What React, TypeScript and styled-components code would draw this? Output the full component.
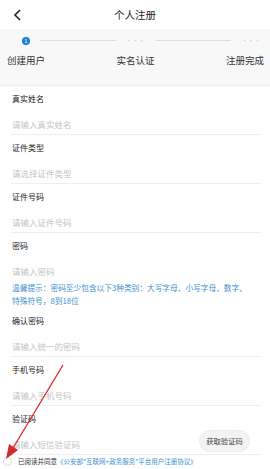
import React from 'react';
import styled, { createGlobalStyle } from 'styled-components';

const GlobalStyle = createGlobalStyle`
  html, body {
    margin: 0;
    padding: 0;
    background: #ffffff;
  }
  body {
    font-family: "Noto Sans CJK SC", "Noto Sans", sans-serif;
    -webkit-font-smoothing: antialiased;
  }
`;

interface Field {
  label: string;
  placeholder: string;
  hint?: string;
  action?: string;
  noDivider?: boolean;
}

const fields: Field[] = [
  { label: '真实姓名', placeholder: '请输入真实姓名' },
  { label: '证件类型', placeholder: '请选择证件类型' },
  { label: '证件号码', placeholder: '请输入证件号码' },
  {
    label: '密码',
    placeholder: '请输入密码',
    noDivider: true,
    hint: '温馨提示：密码至少包含以下3种类别：大写字母、小写字母、数字、\n特殊符号，8到18位',
  },
  { label: '确认密码', placeholder: '请输入统一的密码' },
  { label: '手机号码', placeholder: '请输入手机号码' },
  { label: '验证码', placeholder: '请输入短信验证码', action: '获取验证码' },
];

const steps = ['创建用户', '实名认证', '注册完成'];

const App: React.FC = () => {
  return (
    <>
      <GlobalStyle />
      <Page>
        <Header>
          <Back>
            <svg width="9" height="12" viewBox="0 0 9 12">
              <path d="M7 1 L2 6 L7 11" fill="none" stroke="#222" strokeWidth="1.6" />
            </svg>
          </Back>
          <Title>个人注册</Title>
        </Header>

        <Steps>
          <Track>
            <Dot>1</Dot>
            <Line />
            <Dots>···</Dots>
            <Line />
            <Dots>···</Dots>
          </Track>
          <Labels>
            {steps.map((s) => (
              <StepLabel key={s}>{s}</StepLabel>
            ))}
          </Labels>
        </Steps>

        <Form>
          {fields.map((f) => (
            <Row key={f.label} $noDivider={f.noDivider}>
              <Label>{f.label}</Label>
              <InputLine>
                <Placeholder>{f.placeholder}</Placeholder>
                {f.action && <CodeButton>{f.action}</CodeButton>}
              </InputLine>
              {f.hint && <Hint>{f.hint}</Hint>}
            </Row>
          ))}
        </Form>

        <Agreement>
          <Check />
          <span>
            已阅读并同意<Link>《公安部"互联网+政务服务"平台用户注册协议》</Link>
          </span>
        </Agreement>

        <Arrow width="270" height="469" viewBox="0 0 270 469">
          <line x1="63" y1="365" x2="13" y2="448" stroke="#d32a2a" strokeWidth="1.3" />
          <polygon points="6,459 9,444 18,450" fill="#d32a2a" />
        </Arrow>
      </Page>
    </>
  );
};

const Page = styled.div`
  position: relative;
  width: 270px;
  height: 469px;
  overflow: hidden;
  background: #ffffff;
`;

const Header = styled.div`
  height: 29px;
  display: flex;
  align-items: center;
  justify-content: center;
  position: relative;
`;

const Back = styled.div`
  position: absolute;
  left: 13px;
  top: 9px;
  display: flex;
`;

const Title = styled.div`
  font-size: 10.5px;
  color: #222;
`;

const Steps = styled.div`
  background: #f8f8f8;
  height: 57px;
  border-bottom: 1px solid #efefef;
  box-sizing: border-box;
  padding: 7px 6px 0 7px;
`;

const Track = styled.div`
  display: flex;
  align-items: center;
  height: 9px;
  padding-left: 15px;
  padding-right: 3px;
  gap: 10px;
`;

const Dot = styled.div`
  width: 8px;
  height: 8px;
  border-radius: 50%;
  background: #1d7fd8;
  color: #fff;
  font-size: 5px;
  line-height: 8px;
  text-align: center;
  font-family: "Liberation Sans", sans-serif;
  flex: none;
`;

const Line = styled.div`
  flex: 1;
  height: 1px;
  background: #dcdcdc;
`;

const Dots = styled.div`
  font-size: 6px;
  color: #c8c8c8;
  letter-spacing: 0.5px;
  line-height: 9px;
  flex: none;
`;

const Labels = styled.div`
  display: flex;
  justify-content: space-between;
  margin-top: 9px;
`;

const StepLabel = styled.div`
  font-size: 9.5px;
  color: #333;
  line-height: 12px;
`;

const Form = styled.div`
  padding: 0 9px 0 11px;
`;

const Row = styled.div<{ $noDivider?: boolean }>`
  border-bottom: 1px solid ${(p) => (p.$noDivider ? 'transparent' : '#eeeeee')};
  padding-top: 8px;
`;

const Label = styled.div`
  font-size: 8px;
  line-height: 10px;
  color: #222;
  padding-left: 1px;
`;

const InputLine = styled.div`
  height: 21px;
  margin-top: 9px;
  display: flex;
  align-items: center;
  justify-content: space-between;
  padding-left: 1px;
`;

const Placeholder = styled.div`
  font-size: 8.5px;
  color: #c4c4c4;
`;

const CodeButton = styled.div`
  width: 51px;
  height: 22px;
  border-radius: 11px;
  background: #f3f3f3;
  border: 1px solid #ececec;
  box-sizing: border-box;
  display: flex;
  align-items: center;
  justify-content: center;
  font-size: 7.3px;
  color: #444;
  margin-right: 11px;
  margin-top: -5px;
  flex: none;
`;

const Hint = styled.div`
  font-size: 7.7px;
  line-height: 13px;
  color: #3d8fd1;
  padding-left: 1px;
  white-space: pre-line;
`;

const Agreement = styled.div`
  display: flex;
  align-items: center;
  gap: 6px;
  height: 11px;
  padding-left: 3px;
  margin-top: 1px;
  font-size: 6.5px;
  line-height: 11px;
  color: #333;
`;

const Check = styled.div`
  width: 9px;
  height: 9px;
  border-radius: 50%;
  border: 1px solid #dcdcdc;
  box-sizing: border-box;
  flex: none;
`;

const Link = styled.span`
  color: #3d8fd1;
`;

const Arrow = styled.svg`
  position: absolute;
  left: 0;
  top: 0;
  pointer-events: none;
`;

export default App;
